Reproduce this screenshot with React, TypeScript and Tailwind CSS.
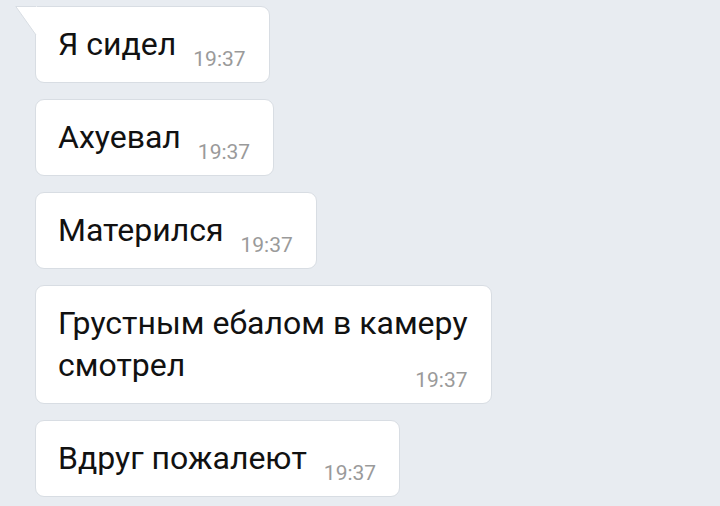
import React from "react";

const messages: { text: string; first?: boolean }[] = [
  { text: "Я сидел", first: true },
  { text: "Ахуевал" },
  { text: "Матерился" },
  { text: "Грустным ебалом в камеру\nсмотрел" },
  { text: "Вдруг пожалеют" },
];

function Bubble({ text, first }: { text: string; first?: boolean }) {
  return (
    <div
      className={
        "relative self-start bg-white border border-[#d8dde3] rounded-[9px] pl-[22px] pr-[23px] pt-[16px] pb-[17px] " +
        (first ? "rounded-tl-none" : "")
      }
    >
      {first && (
        <svg
          className="absolute left-[-21px] top-[-1px]"
          width="22"
          height="30"
          viewBox="0 0 22 30"
        >
          <path d="M22 0.5 L0.8 0.5 L21 29 Z" fill="#ffffff" />
          <path d="M21 0.5 L0.8 0.5 L21 29" fill="none" stroke="#d8dde3" strokeWidth="1" />
        </svg>
      )}
      <div className="whitespace-pre-line text-[32px] leading-[42px] text-[#111] font-['Roboto',sans-serif]">
        {text}
        <span className="float-right relative top-[15px] ml-[17px] text-[21px] leading-[42px] text-[#9a9a9a] font-['Roboto',sans-serif]">
          19:37
        </span>
      </div>
    </div>
  );
}

export default function App() {
  return (
    <div className="w-[720px] h-[506px] overflow-hidden bg-[#e8ecf1] pl-[35px] pt-[6px] flex flex-col gap-[16px]">
      {messages.map((m, i) => (
        <Bubble key={i} text={m.text} first={m.first} />
      ))}
    </div>
  );
}
